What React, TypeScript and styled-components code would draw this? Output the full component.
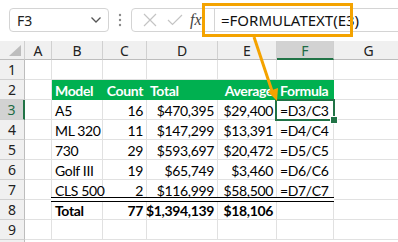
import styled, { createGlobalStyle } from "styled-components";

const GlobalStyle = createGlobalStyle`
  html, body {
    margin: 0;
    padding: 0;
    background: #ffffff;
  }
  * {
    box-sizing: border-box;
  }
`;

type Row = {
  cells: (string | number)[];
  kind?: "head" | "data" | "total";
};

const rows: Row[] = [
  { cells: [] },
  { cells: ["Model", "Count", "Total", "Average", "Formula"], kind: "head" },
  { cells: ["A5", 16, "$470,395", "$29,400", "=D3/C3"], kind: "data" },
  { cells: ["ML 320", 11, "$147,299", "$13,391", "=D4/C4"], kind: "data" },
  { cells: ["730", 29, "$593,697", "$20,472", "=D5/C5"], kind: "data" },
  { cells: ["Golf III", 19, "$65,749", "$3,460", "=D6/C6"], kind: "data" },
  { cells: ["CLS 500", 2, "$116,999", "$58,500", "=D7/C7"], kind: "data" },
  { cells: ["Total", 77, "$1,394,139", "$18,106", ""], kind: "total" },
  { cells: [] },
];

const columns = ["A", "B", "C", "D", "E", "F", "G"];
// alignment per table column (B..F)
const align = ["left", "right", "right", "right", "left"];
const headAlign = ["left", "right", "left", "right", "left"];

export default function App() {
  return (
    <>
      <GlobalStyle />
      <Page>
        <TopBar>
          <NameBox>
            <span>F3</span>
            <svg width="12" height="8" viewBox="0 0 12 8">
              <path d="M1.5 1.5 L6 6 L10.5 1.5" fill="none" stroke="#555" strokeWidth="1.3" />
            </svg>
          </NameBox>
          <Dots>
            <svg width="4" height="14" viewBox="0 0 4 14">
              <circle cx="2" cy="2" r="1.2" fill="#8a8a8a" />
              <circle cx="2" cy="7" r="1.2" fill="#8a8a8a" />
              <circle cx="2" cy="12" r="1.2" fill="#8a8a8a" />
            </svg>
          </Dots>
          <FormulaBox>
            <IconSlot>
              <svg width="14" height="14" viewBox="0 0 14 14">
                <path d="M1 1 L13 13 M13 1 L1 13" stroke="#c4c4c4" strokeWidth="1.2" />
              </svg>
            </IconSlot>
            <IconSlot>
              <svg width="16" height="12" viewBox="0 0 16 12">
                <path d="M1 6 L5.5 10.5 L15 1" fill="none" stroke="#c4c4c4" strokeWidth="1.2" />
              </svg>
            </IconSlot>
            <Fx>fx</Fx>
            <FormulaInput>=FORMULATEXT(E3)</FormulaInput>
          </FormulaBox>
        </TopBar>

        <Sheet>
          <Corner>
            <svg width="14" height="12" viewBox="0 0 14 12">
              <polygon points="13,0 13,11 1,11" fill="#bdbdbd" />
            </svg>
          </Corner>
          {columns.map((c) => (
            <ColHead key={c} $active={c === "F"}>
              {c}
            </ColHead>
          ))}

          {rows.map((row, ri) => {
            const n = ri + 1;
            return [
              <RowHead key={`h${n}`} $active={n === 3}>
                {n}
              </RowHead>,
              <Cell key={`a${n}`} />,
              ...[0, 1, 2, 3, 4].map((ci) => {
                const v = row.cells[ci];
                return (
                  <Cell
                    key={`c${n}-${ci}`}
                    $kind={row.kind}
                    $align={row.kind === "head" ? headAlign[ci] : align[ci]}
                    $double={n === 7}
                  >
                    {v}
                    {n === 3 && ci === 4 && (
                      <Selection>
                        <Handle />
                      </Selection>
                    )}
                  </Cell>
                );
              }),
              <Cell key={`g${n}`} />,
            ];
          })}
          <RowHead />
        </Sheet>

        <Callout />
        <Arrow width="398" height="242" viewBox="0 0 398 242">
          <line x1="254" y1="37" x2="272" y2="91" stroke="#f4a300" strokeWidth="3" />
          <polygon points="277,101 267.8,91.6 278,88" fill="#f4a300" />
        </Arrow>
      </Page>
    </>
  );
}

const Page = styled.div`
  position: relative;
  width: 398px;
  height: 242px;
  overflow: hidden;
  background: #ffffff;
  font-family: "Noto Sans", "Open Sans", sans-serif;
`;

const TopBar = styled.div`
  height: 41px;
  display: flex;
  align-items: center;
  padding-left: 9px;
  padding-bottom: 1px;
`;

const NameBox = styled.div`
  width: 100px;
  height: 24px;
  border: 1px solid #d4d4d4;
  border-radius: 4px;
  display: flex;
  align-items: center;
  justify-content: space-between;
  padding: 0 6px 0 7px;
  font-size: 14px;
  color: #222;
`;

const Dots = styled.div`
  width: 22px;
  display: flex;
  justify-content: center;
`;

const FormulaBox = styled.div`
  flex: 1;
  height: 24px;
  margin-right: -10px;
  border: 1px solid #d4d4d4;
  border-radius: 4px;
  display: flex;
  align-items: center;
  padding-left: 5px;
`;

const IconSlot = styled.div`
  width: 25px;
  display: flex;
  justify-content: center;
`;

const Fx = styled.span`
  font-family: "Liberation Serif", serif;
  font-style: italic;
  font-size: 16px;
  color: #444;
  margin-left: 3px;
  width: 20px;
`;

const FormulaInput = styled.div`
  flex: 1;
  height: 100%;
  border-left: 1px solid #d4d4d4;
  display: flex;
  align-items: center;
  padding-left: 6px;
  font-size: 15px;
  color: #111;
  margin-left: 4px;
`;

const Sheet = styled.div`
  display: grid;
  grid-template-columns: 25px 27px 51px 44px 71px 59px 57px 70px;
  grid-template-rows: 19px;
  grid-auto-rows: 20px;
`;

const Corner = styled.div`
  background: #f0f0f0;
  border-right: 1px solid #d0d0d0;
  border-bottom: 1px solid #bdbdbd;
  display: flex;
  align-items: flex-end;
  justify-content: flex-end;
  padding: 0 2px 2px 0;
`;

const ColHead = styled.div<{ $active?: boolean }>`
  background: ${(p) => (p.$active ? "#d2d2d2" : "#f0f0f0")};
  color: ${(p) => (p.$active ? "#1e6b44" : "#222")};
  border-right: 1px solid #d0d0d0;
  border-bottom: ${(p) => (p.$active ? "2px solid #217346" : "1px solid #bdbdbd")};
  display: flex;
  align-items: center;
  justify-content: center;
  font-size: 14px;
  padding-top: 1px;
`;

const RowHead = styled.div<{ $active?: boolean }>`
  background: ${(p) => (p.$active ? "#d2d2d2" : "#f0f0f0")};
  color: ${(p) => (p.$active ? "#1e6b44" : "#222")};
  border-right: ${(p) => (p.$active ? "2px solid #217346" : "1px solid #bdbdbd")};
  border-bottom: 1px solid #d0d0d0;
  display: flex;
  align-items: center;
  justify-content: center;
  font-size: 14px;
`;

const Cell = styled.div<{ $kind?: string; $align?: string; $double?: boolean }>`
  position: relative;
  border-right: 1px solid ${(p) => (p.$kind === "head" ? "#00b050" : "#e1e1e1")};
  border-bottom: 1px solid ${(p) => (p.$kind === "head" ? "#00b050" : "#e1e1e1")};
  background: ${(p) => (p.$kind === "head" ? "#00b050" : "transparent")};
  color: ${(p) => (p.$kind === "head" ? "#ffffff" : "#000")};
  font-family: "Lato", "Liberation Sans", sans-serif;
  font-size: 14px;
  letter-spacing: -0.35px;
  font-weight: ${(p) => (p.$kind === "head" || p.$kind === "total" ? 700 : 400)};
  display: flex;
  align-items: center;
  justify-content: ${(p) => (p.$align === "right" ? "flex-end" : "flex-start")};
  padding: 2px 3px 0 3px;
  white-space: nowrap;

  ${(p) =>
    p.$double &&
    `
    &::after {
      content: "";
      position: absolute;
      left: -1px;
      right: -1px;
      bottom: -3px;
      height: 3px;
      border-top: 1px solid #000;
      border-bottom: 1px solid #000;
      background: #fff;
      z-index: 1;
    }
  `}
`;

const Selection = styled.div`
  position: absolute;
  left: -2px;
  top: -1px;
  right: -2px;
  bottom: -2px;
  border: 2px solid #217346;
  z-index: 2;
`;

const Handle = styled.div`
  position: absolute;
  right: -4px;
  bottom: -4px;
  width: 6px;
  height: 6px;
  background: #217346;
  outline: 1px solid #fff;
`;

const Callout = styled.div`
  position: absolute;
  left: 202px;
  top: 3px;
  width: 151px;
  height: 34px;
  border: 3px solid #f4a300;
  z-index: 3;
`;

const Arrow = styled.svg`
  position: absolute;
  left: 0;
  top: 0;
  pointer-events: none;
  z-index: 4;
`;
